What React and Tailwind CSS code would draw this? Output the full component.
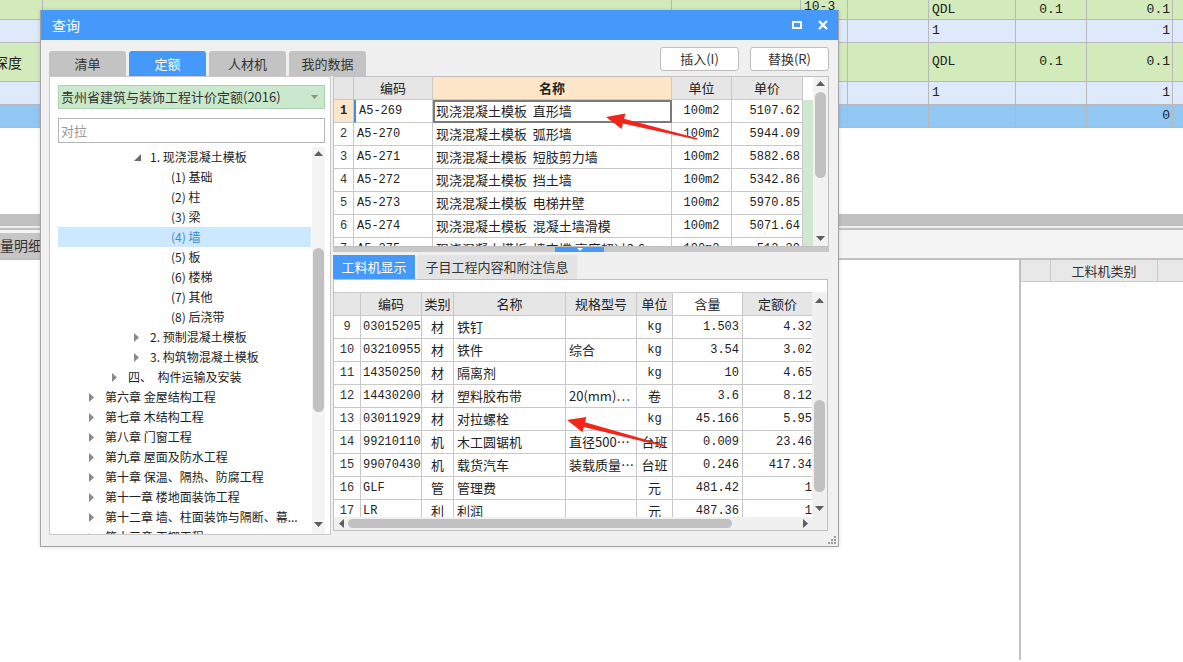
import React from 'react';

const UI = "font-['Noto_Sans_CJK_SC','Noto_Sans',sans-serif]";
const MONO = "font-['Liberation_Mono','Noto_Sans_CJK_SC',monospace]";

// background sheet rows (behind the dialog)
const bgRows = [
  { h: 'h-[20px]', bg: 'bg-[#d3ebbb]', c3: '10-3', c5: 'QDL', c6: '0.1', c7: '0.1' },
  { h: 'h-[23px]', bg: 'bg-[#dee9fb]', c5: '1', c7: '1' },
  { h: 'h-[39px]', bg: 'bg-[#d3ebbb]', c0: '深度', c5: 'QDL', c6: '0.1', c7: '0.1' },
  { h: 'h-[23px]', bg: 'bg-[#dee9fb]', c5: '1', c7: '1' },
  { h: 'h-[23px]', bg: 'bg-[#93c7f3]', c7: '0' },
];

const treeItems = [
  { lvl: 2, icon: 'open', text: '1. 现浇混凝土模板' },
  { lvl: 3, text: '(1) 基础' },
  { lvl: 3, text: '(2) 柱' },
  { lvl: 3, text: '(3) 梁' },
  { lvl: 3, text: '(4) 墙', active: true },
  { lvl: 3, text: '(5) 板' },
  { lvl: 3, text: '(6) 楼梯' },
  { lvl: 3, text: '(7) 其他' },
  { lvl: 3, text: '(8) 后浇带' },
  { lvl: 2, icon: 'closed', text: '2. 预制混凝土模板' },
  { lvl: 2, icon: 'closed', text: '3. 构筑物混凝土模板' },
  { lvl: 1, icon: 'closed', text: '四、  构件运输及安装' },
  { lvl: 0, icon: 'closed', text: '第六章 金屋结构工程' },
  { lvl: 0, icon: 'closed', text: '第七章 木结构工程' },
  { lvl: 0, icon: 'closed', text: '第八章 门窗工程' },
  { lvl: 0, icon: 'closed', text: '第九章 屋面及防水工程' },
  { lvl: 0, icon: 'closed', text: '第十章 保温、隔热、防腐工程' },
  { lvl: 0, icon: 'closed', text: '第十一章 楼地面装饰工程' },
  { lvl: 0, icon: 'closed', text: '第十二章 墙、柱面装饰与隔断、幕...' },
  { lvl: 0, icon: 'closed', text: '第十三章 天棚工程' },
];

const indent = ['pl-[30px]', 'pl-[53px]', 'pl-[75px]', 'pl-[96px]'];

const quotas = [
  { n: '1', code: 'A5-269', name: '现浇混凝土模板  直形墙', unit: '100m2', price: '5107.62' },
  { n: '2', code: 'A5-270', name: '现浇混凝土模板  弧形墙', unit: '100m2', price: '5944.09' },
  { n: '3', code: 'A5-271', name: '现浇混凝土模板  短肢剪力墙', unit: '100m2', price: '5882.68' },
  { n: '4', code: 'A5-272', name: '现浇混凝土模板  挡土墙', unit: '100m2', price: '5342.86' },
  { n: '5', code: 'A5-273', name: '现浇混凝土模板  电梯井壁', unit: '100m2', price: '5970.85' },
  { n: '6', code: 'A5-274', name: '现浇混凝土模板  混凝土墙滑模', unit: '100m2', price: '5071.64' },
  { n: '7', code: 'A5-275', name: '现浇混凝土模板  墙支撑 高度超过3.6m', unit: '100m2', price: '512.30' },
];

const materials = [
  { n: '9', code: '03015205', type: '材', name: '铁钉', spec: '', unit: 'kg', qty: '1.503', price: '4.32' },
  { n: '10', code: '03210955', type: '材', name: '铁件', spec: '综合', unit: 'kg', qty: '3.54', price: '3.02' },
  { n: '11', code: '14350250', type: '材', name: '隔离剂', spec: '', unit: 'kg', qty: '10', price: '4.65' },
  { n: '12', code: '14430200', type: '材', name: '塑料胶布带', spec: '20(mm)…', unit: '卷', qty: '3.6', price: '8.12' },
  { n: '13', code: '03011929', type: '材', name: '对拉螺栓', spec: '', unit: 'kg', qty: '45.166', price: '5.95' },
  { n: '14', code: '99210110', type: '机', name: '木工圆锯机', spec: '直径500…', unit: '台班', qty: '0.009', price: '23.46' },
  { n: '15', code: '99070430', type: '机', name: '载货汽车', spec: '装载质量…', unit: '台班', qty: '0.246', price: '417.34' },
  { n: '16', code: 'GLF', type: '管', name: '管理费', spec: '', unit: '元', qty: '481.42', price: '1' },
  { n: '17', code: 'LR', type: '利', name: '利润', spec: '', unit: '元', qty: '487.36', price: '1' },
];

const TriUp = () => (
  <svg width="9" height="5" viewBox="0 0 9 5"><polygon points="0,5 4.5,0 9,5" fill="#5f5f5f" /></svg>
);
const TriDown = () => (
  <svg width="9" height="5" viewBox="0 0 9 5"><polygon points="0,0 9,0 4.5,5" fill="#5f5f5f" /></svg>
);
const TriLeft = () => (
  <svg width="5" height="9" viewBox="0 0 5 9"><polygon points="5,0 5,9 0,4.5" fill="#5f5f5f" /></svg>
);
const TriRight = () => (
  <svg width="5" height="9" viewBox="0 0 5 9"><polygon points="0,0 5,4.5 0,9" fill="#5f5f5f" /></svg>
);

const TreeIcon = ({ icon }) => {
  if (icon === 'open')
    return (
      <svg width="7" height="7" viewBox="0 0 7 7"><polygon points="7,0 7,7 0,7" fill="#6b6b6b" /></svg>
    );
  if (icon === 'closed')
    return (
      <svg width="5" height="9" viewBox="0 0 5 9"><polygon points="0,0 5,4.5 0,9" fill="#8a8a8a" /></svg>
    );
  return null;
};

const cell = 'border-r border-b border-[#c8c8c8] flex items-center overflow-hidden whitespace-pre';

const App = () => {
  return (
    <div className={`relative w-[1183px] h-[662px] overflow-hidden bg-white text-[#222] ${UI}`}>
      {/* background sheet */}
      <div className={`${MONO} text-[13px]`}>
        {bgRows.map((r, i) => (
          <div
            key={i}
            className={`grid grid-cols-[43px_629px_129px_47px_81px_87px_71px_86px_10px] ${r.h} ${r.bg} border-b border-[#b9b9b9]`}
          >
            <div className={`border-r border-[#b9b9b9] flex items-center overflow-hidden ${UI} text-[14px]`}>
              {r.c0 && <span className="-ml-[6px] whitespace-nowrap">{r.c0}</span>}
            </div>
            <div className="border-r border-[#b9b9b9]" />
            <div className="border-r border-[#b9b9b9]" />
            <div className="border-r border-[#b9b9b9] pl-[3px] leading-[14px] overflow-hidden">{r.c3}</div>
            <div className="border-r border-[#b9b9b9]" />
            <div className="border-r border-[#b9b9b9] flex items-center pl-[3px]">{r.c5}</div>
            <div className="border-r border-[#b9b9b9] flex items-center justify-center">{r.c6}</div>
            <div className="border-r border-[#b9b9b9] flex items-center justify-end pr-[2px]">{r.c7}</div>
            <div />
          </div>
        ))}
      </div>
      <div className="h-[86px]" />
      <div className="h-[12px] bg-[#c0c0c0]" />
      <div className="h-[2px] bg-[#ececec]" />
      <div className="h-[2px] bg-[#c0c0c0]" />
      <div className="h-[30px] bg-[#f4f4f4] flex items-end border-b-2 border-[#c0c0c0]">
        <div className="w-[40px] h-[25px] bg-[#c6c6c6] overflow-hidden flex items-center text-[14px] text-[#333]">
          <span className="-ml-[28px] whitespace-nowrap">工程量明细</span>
        </div>
      </div>
      <div className="flex h-[400px]">
        <div className="flex-1" />
        <div className="w-[2px] bg-[#c0c0c0]" />
        <div className="w-[162px]">
          <div className="h-[22px] bg-[#e8e8e8] border-b border-[#c8c8c8] flex text-[13px] text-[#333]">
            <div className="w-[30px] border-r border-[#c8c8c8]" />
            <div className="w-[107px] border-r border-[#c8c8c8] flex items-center justify-center">工料机类别</div>
            <div className="flex-1" />
          </div>
        </div>
      </div>

      {/* dialog window */}
      <div className="absolute left-[40px] top-[10px] w-[799px] h-[537px] bg-[#f0f0f0] border-x border-b border-[#a3a3a3] shadow-[0_0_4px_rgba(0,0,0,0.15)] flex flex-col">
        <div className="h-[30px] bg-[#4599fb] flex items-center justify-between pl-[11px] pr-[10px] text-white">
          <span className="text-[14px]">查询</span>
          <div className="flex items-center gap-[16px]">
            <div className="w-[10px] h-[8px] border-2 border-white" />
            <svg width="10" height="10" viewBox="0 0 10 10">
              <path d="M1 1 L9 9 M9 1 L1 9" stroke="white" strokeWidth="2.2" />
            </svg>
          </div>
        </div>

        {/* tab row + buttons */}
        <div className="h-[36px] flex justify-between pl-[8px] pr-[9px]">
          <div className="flex gap-[3px] self-end text-[13px]">
            <div className="w-[77px] h-[25px] rounded-t-[3px] bg-[#c3c3c3] text-[#333] flex items-center justify-center">清单</div>
            <div className="w-[77px] h-[25px] rounded-t-[3px] bg-[#4599fb] text-white flex items-center justify-center">定额</div>
            <div className="w-[77px] h-[25px] rounded-t-[3px] bg-[#c3c3c3] text-[#333] flex items-center justify-center">人材机</div>
            <div className="w-[77px] h-[25px] rounded-t-[3px] bg-[#c3c3c3] text-[#333] flex items-center justify-center">我的数据</div>
          </div>
          <div className="flex gap-[11px] mt-[7px] text-[13px] text-[#333]">
            <div className="w-[79px] h-[24px] bg-white border border-[#bdbdbd] rounded-[3px] flex items-center justify-center">插入(I)</div>
            <div className="w-[79px] h-[24px] bg-white border border-[#bdbdbd] rounded-[3px] flex items-center justify-center">替换(R)</div>
          </div>
        </div>

        {/* main area */}
        <div className="h-[459px] flex gap-[2px] pl-[8px]">
          {/* left: quota tree */}
          <div className="w-[282px] h-full bg-white border border-[#c9c9c9] flex flex-col pl-[8px] pr-[5px]">
            <div className="mt-[8px] h-[24px] bg-[#cae8cc] border border-[#acd3ae] flex items-center justify-between pl-[2px] pr-[6px] text-[13px] text-[#333]">
              <span>贵州省建筑与装饰工程计价定额(2016)</span>
              <svg width="7" height="4" viewBox="0 0 7 4"><polygon points="0,0 7,0 3.5,4" fill="#8a8a8a" /></svg>
            </div>
            <div className="mt-[9px] h-[25px] bg-white border border-[#b5b5b5] flex items-center pl-[2px] text-[13px] text-[#9a9a9a]">
              对拉
            </div>
            <div className="mt-[4px] flex-1 flex gap-[1px] overflow-hidden">
              <div className="w-[253px] text-[12px]">
                {treeItems.map((t, i) => (
                  <div
                    key={i}
                    className={`h-[20px] flex items-center whitespace-pre ${indent[t.lvl]} ${t.active ? 'bg-[#cce8ff] text-[#3b8ae0]' : ''}`}
                  >
                    <div className="w-[17px] flex items-center pl-[1px]">
                      <TreeIcon icon={t.icon} />
                    </div>
                    <span>{t.text}</span>
                  </div>
                ))}
              </div>
              <div className="w-[13px] bg-[#f4f4f4] flex flex-col items-center">
                <div className="h-[12px] flex items-center justify-center"><TriUp /></div>
                <div className="mt-[89px] w-[11px] h-[164px] rounded-full bg-[#c1c1c1]" />
                <div className="flex-1" />
                <div className="h-[14px] flex items-start justify-center pt-[2px]"><TriDown /></div>
              </div>
            </div>
          </div>

          {/* right column */}
          <div className="w-[496px] h-full flex flex-col">
            {/* quota grid */}
            <div className="h-[171px] bg-white border border-[#c0c0c0] flex overflow-hidden">
              <div className="w-[479px]">
                <div className="h-[23px] flex bg-[#e6e6e6] text-[13px] text-[#222]">
                  <div className={`w-[20px] ${cell}`} />
                  <div className={`w-[79px] ${cell} justify-center`}>编码</div>
                  <div className={`w-[239px] ${cell} justify-center bg-[#fde5c7] font-bold`}>名称</div>
                  <div className={`w-[60px] ${cell} justify-center`}>单位</div>
                  <div className={`w-[71px] ${cell} justify-center`}>单价</div>
                  <div className="w-[10px] bg-white" />
                </div>
                {quotas.map((r, i) => (
                  <div key={r.n} className="h-[23px] flex">
                    <div className={`w-[20px] ${cell} justify-center ${MONO} text-[12px] ${i === 0 ? 'bg-[#fde5c7] font-bold' : 'text-[#333]'}`}>
                      {r.n}
                    </div>
                    <div className={`w-[79px] ${cell} pl-[3px] ${MONO} text-[12px] ${i === 0 ? 'border-l-2 border-l-[#3c8cf0]' : ''}`}>
                      {r.code}
                    </div>
                    <div className={`w-[239px] ${cell} pl-[3px] text-[13px] ${i === 0 ? 'outline-2 -outline-offset-2 outline-[#7b7b7b] outline' : ''}`}>
                      {r.name}
                    </div>
                    <div className={`w-[60px] ${cell} justify-center ${MONO} text-[12px]`}>{r.unit}</div>
                    <div className={`w-[71px] ${cell} justify-end pr-[2px] ${MONO} text-[12px]`}>{r.price}</div>
                    <div className="w-[10px] bg-[#cfe9cf]" />
                  </div>
                ))}
              </div>
              <div className="w-[15px] bg-[#f2f2f2] flex flex-col items-center">
                <div className="h-[12px] flex items-center justify-center"><TriUp /></div>
                <div className="mt-[3px] w-[11px] h-[86px] rounded-full bg-[#c1c1c1]" />
                <div className="flex-1" />
                <div className="h-[10px] flex items-start justify-center"><TriDown /></div>
              </div>
            </div>

            {/* splitter */}
            <div className="h-[5px] bg-[#c8c8c8] flex">
              <div className="ml-[222px] w-[49px] h-full bg-[#4599fb] flex items-center justify-center">
                <svg width="6" height="3" viewBox="0 0 6 3"><polygon points="0,0 6,0 3,3" fill="white" /></svg>
              </div>
            </div>

            {/* lower tabs */}
            <div className="mt-[3px] h-[24px] flex gap-[2px] text-[13px]">
              <div className="w-[82px] bg-[#4599fb] text-white flex items-center justify-center">工料机显示</div>
              <div className="w-[160px] bg-[#e3e3e3] text-[#333] flex items-center justify-center">子目工程内容和附注信息</div>
            </div>

            {/* material grid */}
            <div className="w-[495px] h-[252px] bg-white border border-[#c0c0c0] flex flex-col">
              <div className="h-[12px]" />
              <div className="flex-1 flex overflow-hidden">
                <div className="w-[478px] flex flex-col">
                  <div className="h-[24px] flex bg-[#e6e6e6] text-[13px] text-[#222] border-t border-[#c8c8c8]">
                    <div className={`w-[27px] ${cell}`} />
                    <div className={`w-[61px] ${cell} justify-center`}>编码</div>
                    <div className={`w-[32px] ${cell} justify-center`}>类别</div>
                    <div className={`w-[112px] ${cell} justify-center`}>名称</div>
                    <div className={`w-[71px] ${cell} justify-center`}>规格型号</div>
                    <div className={`w-[36px] ${cell} justify-center`}>单位</div>
                    <div className={`w-[70px] ${cell} justify-center bg-white`}>含量</div>
                    <div className={`w-[69px] border-b border-[#c8c8c8] flex items-center justify-center`}>定额价</div>
                  </div>
                  <div className="h-[201px] overflow-hidden">
                    {materials.map((m) => (
                      <div key={m.n} className="h-[23px] flex">
                        <div className={`w-[27px] ${cell} justify-center ${MONO} text-[12px] text-[#333]`}>{m.n}</div>
                        <div className={`w-[61px] ${cell} pl-[2px] ${MONO} text-[12px]`}>{m.code}</div>
                        <div className={`w-[32px] ${cell} justify-center text-[13px]`}>{m.type}</div>
                        <div className={`w-[112px] ${cell} pl-[3px] text-[13px]`}>{m.name}</div>
                        <div className={`w-[71px] ${cell} pl-[3px] text-[13px]`}>{m.spec}</div>
                        <div className={`w-[36px] ${cell} justify-center ${/^[a-z]+$/.test(m.unit) ? `${MONO} text-[12px]` : 'text-[13px]'}`}>
                          {m.unit}
                        </div>
                        <div className={`w-[70px] ${cell} justify-end pr-[3px] ${MONO} text-[12px]`}>{m.qty}</div>
                        <div className={`w-[69px] border-b border-[#c8c8c8] flex items-center justify-end ${MONO} text-[12px]`}>{m.price}</div>
                      </div>
                    ))}
                  </div>
                  <div className="h-[13px] bg-[#f0f0f0] flex items-center">
                    <div className="w-[14px] flex justify-center"><TriLeft /></div>
                    <div className="w-[384px] h-[9px] rounded-full bg-[#c1c1c1]" />
                    <div className="flex-1" />
                    <div className="w-[14px] flex justify-center"><TriRight /></div>
                  </div>
                </div>
                <div className="flex-1 bg-[#f0f0f0] flex flex-col items-center">
                  <div className="h-[16px] flex items-center justify-center"><TriUp /></div>
                  <div className="mt-[92px] w-[11px] h-[92px] rounded-full bg-[#c1c1c1]" />
                  <div className="flex-1" />
                  <div className="h-[26px] flex items-start justify-center pt-[2px]"><TriDown /></div>
                </div>
              </div>
            </div>
          </div>
        </div>

        {/* bottom strip with grip */}
        <div className="flex-1 flex justify-end items-end pr-[2px] pb-[2px]">
          <svg width="8" height="8" viewBox="0 0 8 8">
            <rect x="6" y="0" width="2" height="2" fill="#9a9a9a" />
            <rect x="3" y="3" width="2" height="2" fill="#9a9a9a" />
            <rect x="6" y="3" width="2" height="2" fill="#9a9a9a" />
            <rect x="0" y="6" width="2" height="2" fill="#9a9a9a" />
            <rect x="3" y="6" width="2" height="2" fill="#9a9a9a" />
            <rect x="6" y="6" width="2" height="2" fill="#9a9a9a" />
          </svg>
        </div>
      </div>

      {/* red annotation arrows */}
      <svg className="absolute left-0 top-0 pointer-events-none" width="1183" height="662" viewBox="0 0 1183 662">
        <polygon
          points="606,117 625.4,113.4 624.1,118.8 697.2,138.2 696.8,139.8 622.9,123.6 621.6,129"
          fill="#f0261c"
        />
        <polygon
          points="567,420 586.4,416.9 585,422.2 665.2,445.2 664.8,446.8 583.8,427 582.4,432.3"
          fill="#f0261c"
        />
      </svg>
    </div>
  );
};

export default App;
